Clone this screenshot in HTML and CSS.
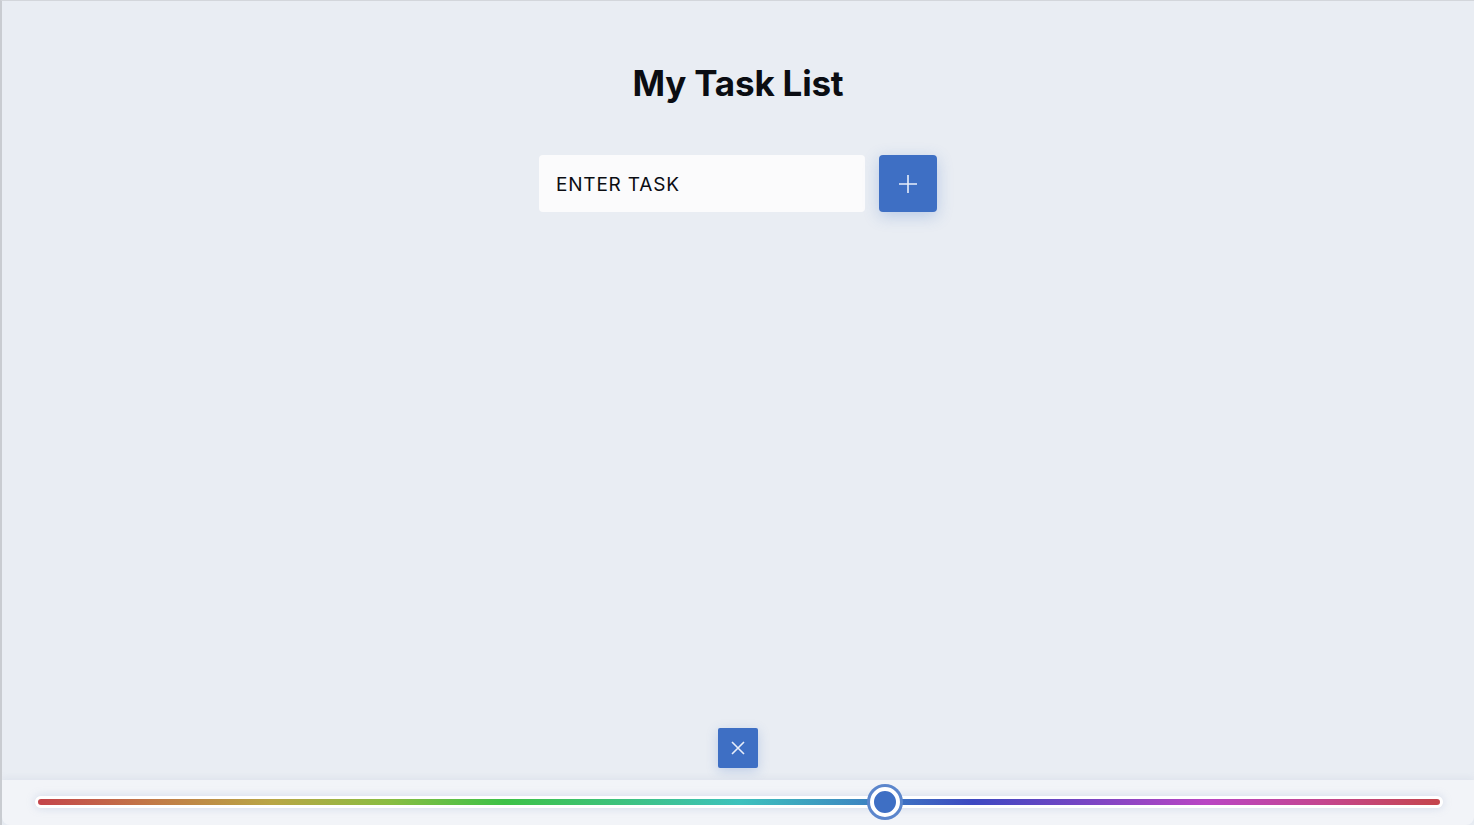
FILE: index.html
```html
<!DOCTYPE html>
<html lang="en">
<head>
<meta charset="utf-8">
<title>My Task List</title>
<link rel="stylesheet" href="styles.css">
</head>
<body>
<div class="app">
  <main class="main">
    <h1 class="title">My Task List</h1>
    <form class="add-form">
      <input class="task-input" type="text" value="ENTER TASK">
      <button class="add-btn" type="button" aria-label="Add task">
        <svg width="22" height="22" viewBox="0 0 22 22"><path d="M11 2v18M2 11h18" stroke="#e8eefa" stroke-width="1.6" fill="none"/></svg>
      </button>
    </form>
    <div class="spacer"></div>
    <button class="close-btn" type="button" aria-label="Close">
      <svg width="16" height="16" viewBox="0 0 16 16"><path d="M2 2l12 12M14 2L2 14" stroke="#e8eefa" stroke-width="1.6" fill="none"/></svg>
    </button>
  </main>
  <footer class="footer">
    <div class="slider">
      <div class="track"></div>
      <div class="thumb" style="left: 60.4%"></div>
    </div>
  </footer>
</div>
</body>
</html>
```
FILE: styles.css
```css
html, body {
  margin: 0;
  padding: 0;
  height: 100%;
}
body {
  background: #e9edf3;
  font-family: Inter, "Noto Sans", sans-serif;
  color: #0b0d12;
  border-top: 1px solid #d3d6db;
  border-left: 2px solid #c9ccd1;
  box-sizing: border-box;
}
.app {
  height: 100%;
  display: flex;
  flex-direction: column;
}
.main {
  flex: 1;
  display: flex;
  flex-direction: column;
  align-items: center;
}
.title {
  margin: 58px 0 0 0;
  font-size: 35px;
  font-weight: 700;
  line-height: 48px;
  letter-spacing: -0.2px;
}
.add-form {
  margin-top: 48px;
  display: flex;
  gap: 14px;
}
.task-input {
  width: 326px;
  height: 57px;
  box-sizing: border-box;
  border: none;
  border-radius: 4px;
  background: #fbfbfc;
  padding: 2px 17px 0 17px;
  font-family: Inter, "Noto Sans", sans-serif;
  font-size: 19px;
  letter-spacing: 0.8px;
  color: #0b0d12;
  outline: none;
}
.add-btn {
  width: 58px;
  height: 57px;
  border: none;
  border-radius: 4px;
  background: #3e6fc4;
  display: flex;
  align-items: center;
  justify-content: center;
  box-shadow: 0 4px 16px rgba(62, 111, 196, 0.28);
  padding: 0;
}
.spacer {
  flex: 1;
}
.close-btn {
  width: 40px;
  height: 40px;
  border: none;
  border-radius: 2px;
  background: #3e6fc4;
  display: flex;
  align-items: center;
  justify-content: center;
  box-shadow: 0 3px 12px rgba(62, 111, 196, 0.25);
  padding: 0;
  margin-bottom: 12px;
}
.footer {
  height: 45px;
  background: #f2f4f8;
  box-shadow: 0 -2px 6px rgba(160, 175, 200, 0.15);
  display: flex;
  align-items: center;
  padding: 0 31px 0 33px;
  border-bottom-left-radius: 8px;
  border-bottom-right-radius: 8px;
}
.slider {
  position: relative;
  flex: 1;
  height: 12px;
  margin-top: -1px;
}
.track {
  height: 12px;
  box-sizing: border-box;
  border: 3px solid #ffffff;
  border-radius: 6px;
  background: linear-gradient(to right,
    hsl(357, 52%, 52%) 0%,
    hsl(25, 50%, 52%) 8.3%,
    hsl(50, 45%, 50%) 16.7%,
    hsl(85, 48%, 50%) 25%,
    hsl(125, 52%, 50%) 33.3%,
    hsl(150, 52%, 50%) 41.7%,
    hsl(178, 52%, 50%) 50%,
    hsl(205, 52%, 50%) 58.3%,
    hsl(235, 52%, 50%) 66.7%,
    hsl(265, 52%, 52%) 75%,
    hsl(295, 52%, 52%) 83.3%,
    hsl(325, 52%, 52%) 91.7%,
    hsl(357, 52%, 52%) 100%);
  box-shadow: 0 0 8px rgba(150, 170, 210, 0.35);
}
.thumb {
  position: absolute;
  top: 50%;
  width: 22px;
  height: 22px;
  border-radius: 50%;
  background: #3e6fc4;
  border: 4px solid #ffffff;
  box-shadow: 0 0 0 3px #5c86cc;
  transform: translate(-50%, -50%);
}
```
